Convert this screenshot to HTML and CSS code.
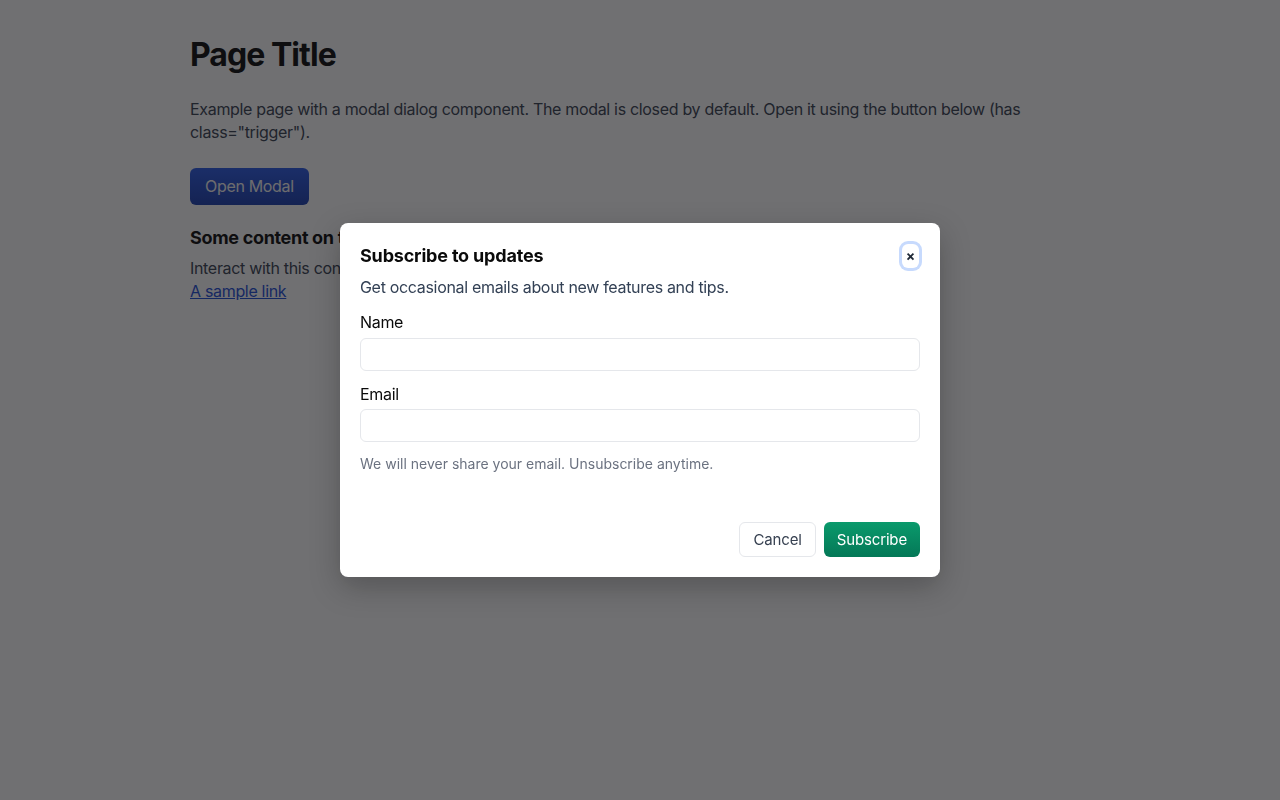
FILE: index.html
```html
<!DOCTYPE html>
<html lang="en">
<head>
<meta charset="utf-8">
<title>Modal Example</title>
<link rel="stylesheet" href="styles.css">
</head>
<body>
<main class="page">
  <h1 class="title">Page Title</h1>
  <p class="intro">Example page with a modal dialog component. The modal is closed by default. Open it using the button below (has class="trigger").</p>
  <button class="trigger" type="button">Open Modal</button>
  <h2 class="section-title">Some content on the page</h2>
  <p class="section-text">Interact with this content when the modal is closed.<br><a href="#" class="link">A sample link</a></p>
</main>

<div class="overlay">
  <div class="modal" role="dialog" aria-modal="true" aria-labelledby="modal-title">
    <div class="modal-header">
      <h2 id="modal-title" class="modal-title">Subscribe to updates</h2>
      <button class="close" type="button" aria-label="Close">×</button>
    </div>
    <p class="modal-desc">Get occasional emails about new features and tips.</p>
    <form class="form">
      <label class="field">
        <span class="label">Name</span>
        <input class="input" type="text">
      </label>
      <label class="field">
        <span class="label">Email</span>
        <input class="input" type="email">
      </label>
      <p class="help">We will never share your email. Unsubscribe anytime.</p>
    </form>
    <div class="actions">
      <button class="btn btn-secondary" type="button">Cancel</button>
      <button class="btn btn-primary" type="button">Subscribe</button>
    </div>
  </div>
</div>
</body>
</html>
```

FILE: styles.css
```css
* { box-sizing: border-box; }

html, body {
  margin: 0;
  padding: 0;
}

body {
  font-family: Inter, "Noto Sans", "Liberation Sans", sans-serif;
  letter-spacing: -0.02em;
  color: #1f2937;
  background: #ffffff;
  min-height: 800px;
}

.page {
  max-width: 900px;
  margin: 0 auto;
  padding: 35px 0 0;
}

.title {
  margin: 0 0 23px;
  font-size: 32px;
  line-height: 40px;
  font-weight: 700;
  letter-spacing: -0.03em;
  color: #0a0a0a;
}

.intro {
  margin: 0 0 24px;
  font-size: 16px;
  line-height: 23px;
  color: #374151;
}

.trigger {
  font-family: inherit;
  letter-spacing: inherit;
  font-size: 16px;
  line-height: 21px;
  padding: 8px 15px;
  border: 0;
  border-radius: 6px;
  color: #f5f5f5;
  background: linear-gradient(#2a5ae6, #1b3fb0);
}

.section-title {
  margin: 20px 0 6px;
  font-size: 18px;
  line-height: 26px;
  font-weight: 700;
  color: #0a0a0a;
}

.section-text {
  margin: 0;
  font-size: 16px;
  line-height: 23px;
  color: #374151;
}

.link {
  color: #1d4ed8;
  text-decoration: underline;
}

.overlay {
  position: fixed;
  inset: 0;
  background: rgba(17, 17, 20, 0.6);
  display: flex;
  align-items: center;
  justify-content: center;
}

.modal {
  width: 600px;
  background: #ffffff;
  border-radius: 8px;
  padding: 21px 20px 20px;
  box-shadow: 0 10px 30px rgba(0, 0, 0, 0.25);
}

.modal-header {
  display: flex;
  justify-content: space-between;
  align-items: center;
  margin-bottom: 7px;
}

.modal-title {
  margin: 0;
  font-size: 18px;
  line-height: 24px;
  font-weight: 700;
  letter-spacing: -0.01em;
  color: #0a0a0a;
}

.close {
  font-family: inherit;
  width: 17px;
  height: 24px;
  margin-right: 1px;
  padding: 0;
  border: 0;
  border-radius: 6px;
  background: #ffffff;
  color: #1f2937;
  font-size: 14px;
  font-weight: 700;
  line-height: 24px;
  box-shadow: 0 0 0 3px #c7dafd;
}

.modal-desc {
  margin: 0 0 12px;
  font-size: 16px;
  line-height: 24px;
  color: #334155;
}

.form {
  display: flex;
  flex-direction: column;
}

.field {
  display: flex;
  flex-direction: column;
  margin-bottom: 12px;
}

.label {
  font-size: 16px;
  line-height: 22px;
  color: #0a0a0a;
  margin-bottom: 4.5px;
}

.input {
  height: 33px;
  border: 1px solid #e5e7eb;
  border-radius: 6px;
  font: inherit;
  padding: 0 10px;
  background: #fff;
}

.help {
  margin: 0;
  font-size: 14px;
  line-height: 20px;
  letter-spacing: 0;
  color: #6b7280;
}

.actions {
  display: flex;
  justify-content: flex-end;
  gap: 8px;
  margin-top: 48px;
}

.btn {
  font-family: inherit;
  font-size: 15px;
  line-height: 21px;
  letter-spacing: -0.01em;
  height: 35px;
  padding: 0 13px;
  border-radius: 6px;
}

.btn-secondary {
  background: #ffffff;
  border: 1px solid #e5e7eb;
  color: #374151;
}

.btn-primary {
  background: linear-gradient(#0a9a6c, #047857);
  border: 0;
  color: #ffffff;
}
```
